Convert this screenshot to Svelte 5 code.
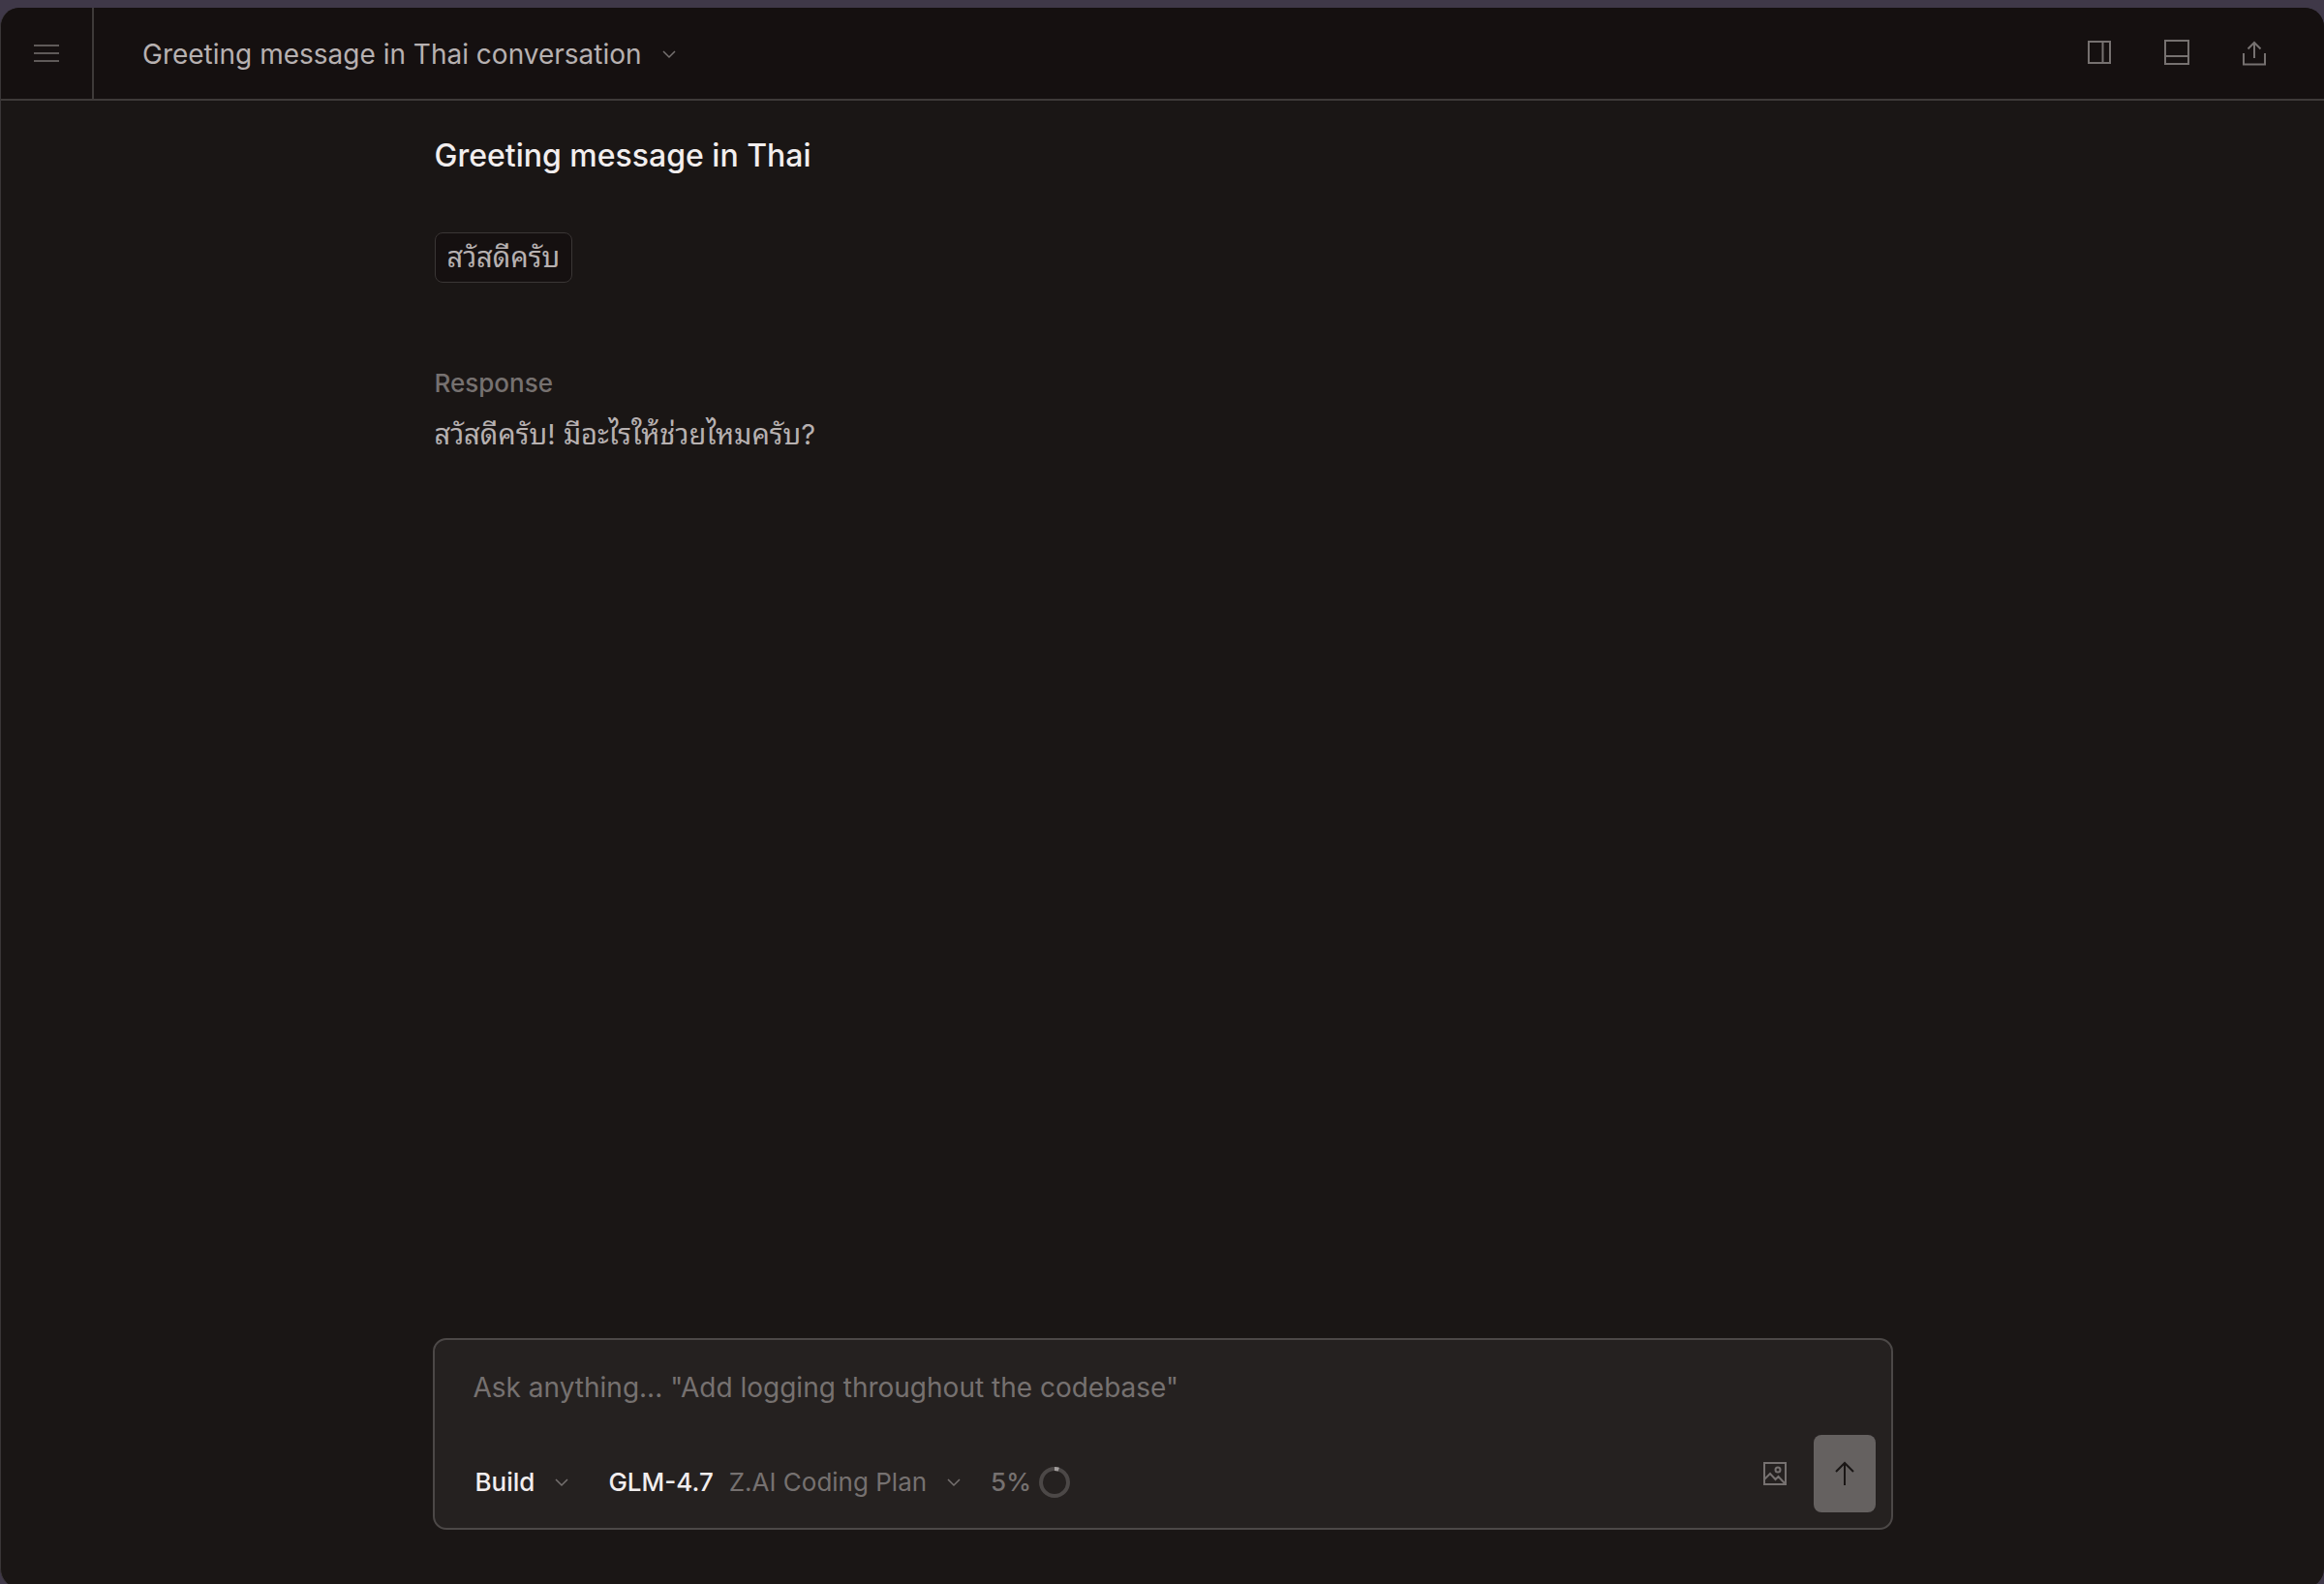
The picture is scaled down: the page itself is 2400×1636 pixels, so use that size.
<script>
  let prompt = $state('');
  const percent = 5;
  const ring = 2 * Math.PI * 14;
</script>

{#snippet chevron()}
  <svg class="chevron" viewBox="0 0 16 16" aria-hidden="true"><path d="M2 5l6 6 6-6" /></svg>
{/snippet}

<div class="window">
  <header>
    <button class="menu" aria-label="Menu">
      <svg class="icon" viewBox="0 0 28 28" aria-hidden="true"><path d="M1 6h26M1 14h26M1 22h26" /></svg>
    </button>
    <button class="title">Greeting message in Thai conversation {@render chevron()}</button>
    <nav aria-label="View">
      <button aria-label="Toggle side panel">
        <svg class="icon" viewBox="0 0 28 28" aria-hidden="true"><path d="M3 2h22v22H3zM17.500 2v22" /></svg>
      </button>
      <button aria-label="Toggle bottom panel">
        <svg class="icon" viewBox="0 0 28 28" aria-hidden="true"><path d="M2 1h24v24H2zM2 17h24" /></svg>
      </button>
      <button aria-label="Share">
        <svg class="icon" viewBox="0 0 28 28" aria-hidden="true"><path d="M3 14v11.500h22V14M14 19V3M7.500 9.500L14 3l6.500 6.500" /></svg>
      </button>
    </nav>
  </header>

  <main>
    <article>
      <h1>Greeting message in Thai</h1>
      <p class="message" lang="th">สวัสดีครับ</p>
      <h2>Response</h2>
      <p class="response" lang="th">สวัสดีครับ! มีอะไรให้ช่วยไหมครับ?</p>
    </article>

    <form onsubmit={(e) => e.preventDefault()}>
      <input
        type="text"
        aria-label="Prompt"
        placeholder={'Ask anything... "Add logging throughout the codebase"'}
        bind:value={prompt}
      />
      <div class="controls">
        <div class="options">
          <button type="button" class="build">Build {@render chevron()}</button>
          <button type="button" class="model">
            <strong>GLM-4.7</strong><span>Z.AI Coding Plan</span>{@render chevron()}
          </button>
          <div class="usage">
            {percent}%
            <svg viewBox="0 0 32 32" aria-hidden="true">
              <circle cx="16" cy="16" r="14" />
              <circle class="used" cx="16" cy="16" r="14" stroke-dasharray="{(ring * percent) / 100} {ring}" />
            </svg>
          </div>
        </div>
        <div class="actions">
          <button type="button" class="attach" aria-label="Attach image">
            <svg class="icon" viewBox="0 0 28 28" aria-hidden="true">
              <path d="M3 3h22v22H3zM3 20l6-6 5.500 6 3-3 7.500 8" /><circle cx="17" cy="10" r="2.500" />
            </svg>
          </button>
          <button class="send" aria-label="Send">
            <svg class="icon" viewBox="0 0 28 28" aria-hidden="true"><path d="M14 26V3M5 12l9-9 9 9" /></svg>
          </button>
        </div>
      </div>
    </form>
  </main>
</div>

<style>
  :global(body) {
    background: #3f3848;
    overflow: hidden;
  }
  .window {
    box-sizing: border-box;
    display: flex;
    flex-direction: column;
    height: calc(100vh - 4px);
    margin: 8px 0 0;
    border-left: 1px solid #3a3637;
    border-radius: 20px;
    overflow: hidden;
    background: #1a1615;
    color: #b7b1b1;
    font: 28px/42px Inter, "Noto Sans Thai Looped", Loma, Umpush, Waree, Garuda, "Noto Serif Thai", "Liberation Sans", sans-serif;
  }
  button {
    display: flex;
    align-items: center;
    margin: 0;
    padding: 0;
    border: 0;
    background: none;
    color: inherit;
    font: inherit;
  }
  svg {
    display: block;
    flex: none;
    fill: none;
    stroke: #767170;
    stroke-width: 2;
  }
  .icon {
    width: 28px;
    height: 28px;
  }
  .chevron {
    width: 16px;
    height: 16px;
    stroke-width: 1.5;
  }
  header {
    display: flex;
    height: 94px;
    flex: none;
    border-bottom: 2px solid #3e3a39;
    background: #151010;
  }
  .menu {
    width: 96px;
    justify-content: center;
    border-right: 2px solid #3e3a39;
  }
  .menu svg {
    stroke: #5f5a59;
  }
  .title {
    gap: 20px;
    padding: 2px 0 0 50px;
  }
  nav {
    display: flex;
    gap: 52px;
    margin-left: auto;
    padding-right: 58px;
  }
  main {
    display: flex;
    flex: 1;
    flex-direction: column;
    justify-content: space-between;
    align-items: center;
    padding: 33px 48px 60px;
  }
  article,
  form {
    box-sizing: border-box;
    width: 100%;
    max-width: 1508px;
  }
  article {
    padding: 0 2px;
  }
  h1,
  h2,
  p {
    margin: 0;
  }
  h1 {
    color: #f2eeee;
    font-size: 32px;
    font-weight: 500;
    line-height: 48px;
  }
  p {
    font-size: 29px;
  }
  .message {
    width: fit-content;
    margin-top: 55px;
    padding: 4px 12px;
    border: 1px solid #3a3635;
    border-radius: 8px;
    background: #151010;
  }
  h2 {
    margin-top: 84px;
    color: #767170;
    font-size: 26px;
    font-weight: 500;
    line-height: 40px;
  }
  .response {
    margin-top: 12px;
  }
  form {
    padding: 28px 16px 16px 40px;
    border: 2px solid #4c4847;
    border-radius: 14px;
    background: #252120;
  }
  input {
    display: block;
    width: 100%;
    height: 42px;
    padding: 0;
    border: 0;
    outline: 0;
    background: none;
    color: #f2eeee;
    font: inherit;
  }
  input::placeholder {
    color: #767170;
    opacity: 1;
  }
  .controls {
    display: flex;
    align-items: flex-end;
    justify-content: space-between;
    margin-top: 28px;
    padding-left: 2px;
    color: #767170;
    font-size: 26px;
  }
  .options {
    display: flex;
    align-items: center;
    padding-bottom: 10px;
  }
  .build {
    gap: 20px;
    color: #f2eeee;
    font-weight: 500;
  }
  .model {
    gap: 20px;
    margin-left: 40px;
  }
  strong {
    margin-right: -4px;
    color: #f2eeee;
    font-weight: 500;
  }
  .usage {
    display: flex;
    align-items: center;
    gap: 8px;
    margin-left: 30px;
    font-weight: 500;
  }
  .usage svg {
    width: 32px;
    height: 32px;
    stroke: #4c4847;
    stroke-width: 4;
  }
  .usage .used {
    stroke: #a39e9d;
    transform: rotate(-90deg);
    transform-origin: center;
  }
  .actions {
    display: flex;
    gap: 26px;
  }
  .send {
    width: 64px;
    height: 80px;
    justify-content: center;
    border-radius: 8px;
    background: #656160;
  }
  .send svg {
    stroke: #1a1615;
  }
</style>
